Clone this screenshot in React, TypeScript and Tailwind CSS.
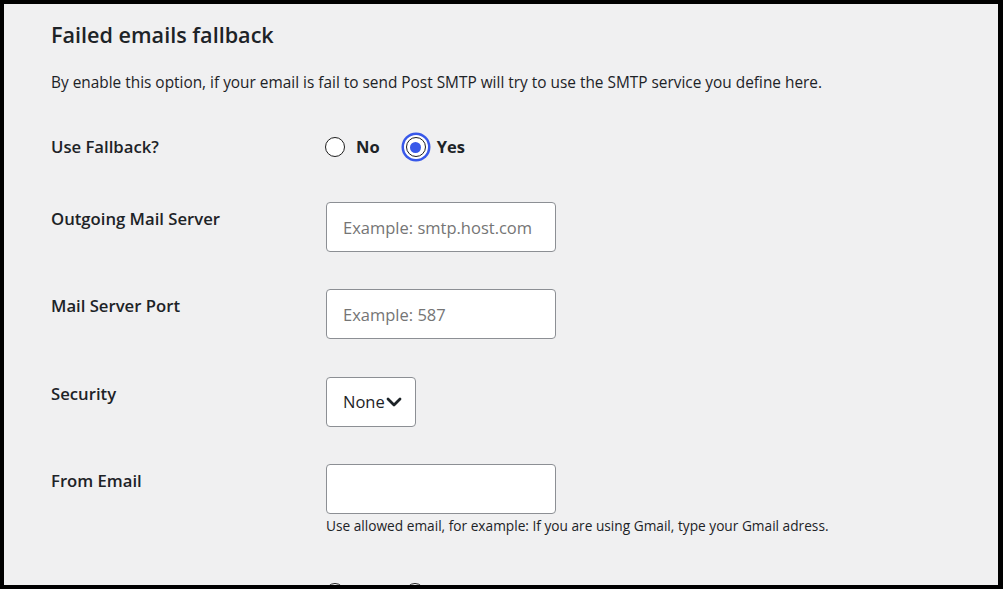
import { ChevronDown } from "lucide-react";

const FONT = { fontFamily: '"Open Sans", "Noto Sans", "Liberation Sans", sans-serif' };

function Radio({ label, checked }: { label: string; checked?: boolean }) {
  return (
    <label className="flex items-center gap-[11px]">
      <span
        className={
          "flex h-5 w-5 items-center justify-center rounded-full border border-[#1e1e1e] bg-white " +
          (checked ? "shadow-[0_0_0_2px_#fff,0_0_0_4.5px_#3858e9]" : "")
        }
      >
        {checked && <span className="h-[11px] w-[11px] rounded-full bg-[#3858e9]" />}
      </span>
      <span className="text-[16.5px] font-bold text-[#1d2327]">{label}</span>
    </label>
  );
}

function Row({
  label,
  className,
  children,
}: {
  label: string;
  className?: string;
  children: React.ReactNode;
}) {
  return (
    <div className={"flex items-start " + (className ?? "")}>
      <div className="w-[275px] pt-[5px] text-[16.7px] font-semibold leading-6 text-[#1d2327]">
        {label}
      </div>
      <div>{children}</div>
    </div>
  );
}

function TextInput({ placeholder }: { placeholder?: string }) {
  return (
    <input
      placeholder={placeholder}
      className="h-[50px] w-[230px] rounded border border-[#8c8f94] bg-white px-4 text-[16.5px] text-[#1d2327] placeholder:text-[#757575] outline-none"
    />
  );
}

export default function App() {
  return (
    <div
      className="h-[589px] w-[1003px] overflow-hidden border-[4px] border-r-[5px] border-black bg-[#f0f0f1]"
      style={FONT}
    >
      <div className="pl-[47px] pt-[17px]">
        <h2 className="text-[21.6px] font-semibold leading-[28px] text-[#1d2327]">
          Failed emails fallback
        </h2>
        <p className="mt-[23px] whitespace-nowrap text-[15.4px] leading-[22px] text-[#1d2327]">
          By enable this option, if your email is fail to send Post SMTP will try to use the SMTP
          service you define here.
        </p>

        <div className="mt-[38px] flex h-[30px] items-center">
          <div className="w-[274px] text-[16.7px] font-semibold text-[#1d2327]">Use Fallback?</div>
          <div className="flex items-center gap-[26px]">
            <Radio label="No" />
            <Radio label="Yes" checked />
          </div>
        </div>

        <Row label="Outgoing Mail Server" className="mt-[40px]">
          <TextInput placeholder="Example: smtp.host.com" />
        </Row>
        <Row label="Mail Server Port" className="mt-[37px]">
          <TextInput placeholder="Example: 587" />
        </Row>
        <Row label="Security" className="mt-[38px]">
          <div className="flex h-[50px] w-[90px] items-center rounded border border-[#8c8f94] bg-white pl-4 text-[16.5px] text-[#1d2327]">
            None
            <ChevronDown size={24} strokeWidth={2.8} className="-ml-[3px]" />
          </div>
        </Row>
        <Row label="From Email" className="mt-[37px]">
          <TextInput />
          <p className="mt-[3px] whitespace-nowrap text-[13.7px] leading-[18px] text-[#1d2327]">
            Use allowed email, for example: If you are using Gmail, type your Gmail adress.
          </p>
        </Row>

        <div className="mt-[43px] flex h-[30px] items-center">
          <div className="w-[274px]" />
          <div className="flex items-center gap-[60px]">
            <span className="h-5 w-5 rounded-full border border-[#1e1e1e] bg-white" />
            <span className="h-5 w-5 rounded-full border border-[#1e1e1e] bg-white" />
          </div>
        </div>
      </div>
    </div>
  );
}
